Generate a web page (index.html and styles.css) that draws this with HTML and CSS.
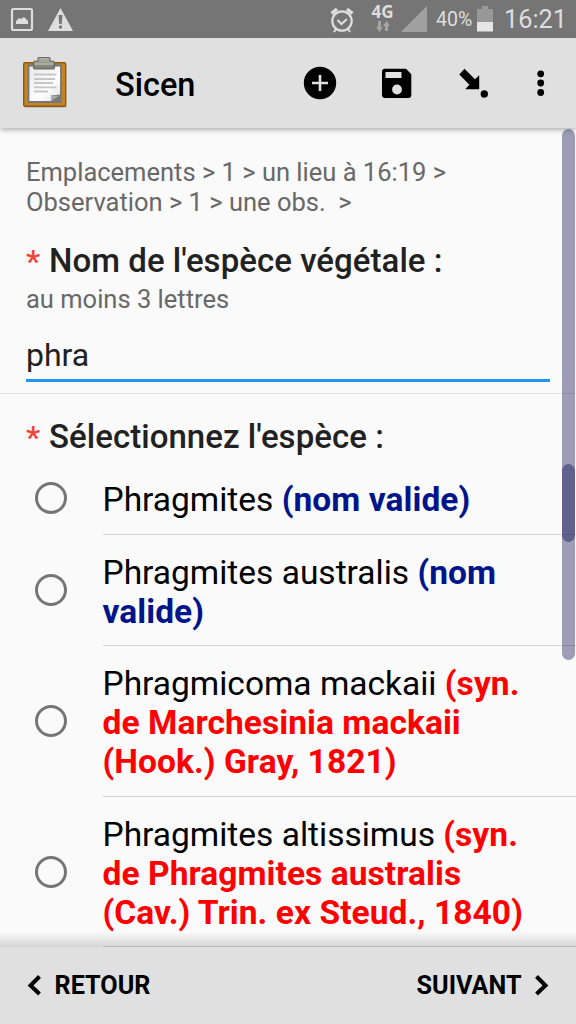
FILE: index.html
```html
<!DOCTYPE html>
<html lang="fr">
<head>
<meta charset="utf-8">
<title>Sicen</title>
<link rel="stylesheet" href="styles.css">
</head>
<body>
<div class="screen">
  <div class="status">
    <svg class="status-left" width="84" height="38" viewBox="0 0 84 38">
      <rect x="12" y="9" width="20" height="21" rx="1.500" fill="none" stroke="#dedede" stroke-width="2.200"/>
      <path d="M16 24v-3l3-3 2 1 3-2 4 4v3z" fill="#dedede"/>
      <path d="M60.500 8L73 31H48z" fill="#dedede"/>
      <path d="M58.500 15h4l-.8 9h-2.400z" fill="#757575"/><circle cx="60.500" cy="27" r="1.700" fill="#757575"/>
    </svg>
    <svg class="clock" width="24" height="26" viewBox="0 0 24 26">
      <g fill="none" stroke="#dedede"><circle cx="12" cy="14" r="9.700" stroke-width="2.200"/>
      <path d="M1.500 6.500L7 2M22.500 6.500L17 2" stroke-width="3.500"/>
      <path d="M7.500 13l4 4 5.500-5" stroke-width="2"/><path d="M6 22l-2 3M18 22l2 3" stroke-width="2"/></g>
    </svg>
    <div class="network"><span>4G</span>
      <svg width="14" height="11" viewBox="0 0 14 11"><path d="M2 0h3v6h2l-3.500 5L0 6h2zM9 10V5H7l3.500-5L14 5h-2v5z" fill="#a5a5a5"/></svg>
    </div>
    <svg class="signal" width="26" height="26" viewBox="0 0 26 26"><path d="M26 0v26H0z" fill="#a0a0a0"/></svg>
    <span class="percent">40%</span>
    <svg class="battery" width="16" height="26" viewBox="0 0 16 26"><path d="M5 0h6v3h5v13H0V3h5z" fill="#989898"/><path d="M0 16h16v9.500H0z" fill="#e6e6e6"/></svg>
    <span class="time">16:21</span>
  </div>

  <header class="toolbar">
    <svg class="logo" width="46" height="54" viewBox="0 0 46 54">
      <defs>
        <linearGradient id="paper" x2="1" y2="1"><stop stop-color="#e5e5e5"/><stop offset=".6" stop-color="#fff"/><stop offset="1" stop-color="#ddd"/></linearGradient>
        <linearGradient id="clip" x2="0" y2="1"><stop stop-color="#b3b4a8"/><stop offset="1" stop-color="#777a70"/></linearGradient>
      </defs>
      <rect x="2" y="49" width="43" height="3" rx="1.500" fill="#000" opacity=".13"/>
      <rect x="1.700" y="6.700" width="42" height="43.600" rx="1.500" fill="#c68424" stroke="#8d5a12" stroke-width="1.400"/>
      <path d="M6.500 9.500h32.500v36.500H6.500z" fill="url(#paper)" stroke="#73777a" stroke-width="1.800"/>
      <path d="M12 18.500h22.500M12 23h21M12 27h19M12 31.300h22.500M12 35.500h14" stroke="#c6c6c6" stroke-width="1.800"/>
      <path d="M29 39.500l9-1V46h-9z" fill="#777b78"/><path d="M29 45v-5.500l8 .2z" fill="#a9aca8"/>
      <path d="M16 5V2.500q0-1 1-1h10q1 0 1 1V5h3q1.500 0 1.500 2v4q0 2-2 2h-17q-2 0-2-2V7q0-2 1.500-2z" fill="url(#clip)" stroke="#6a6d65" stroke-width="1.200"/>
      <path d="M13 8h18" stroke="#c5c6bd" stroke-width="1"/>
    </svg>
    <h1 class="app-title">Sicen</h1>
    <svg class="actions" width="260" height="60" viewBox="0 0 260 60">
      <circle cx="20" cy="30" r="16.200"/><path d="M20 22v16M12 30h16" stroke="#e0e0e0" stroke-width="2.600"/>
      <path d="M85 15.700h21l5.300 5.600V42q0 3-3 3H85q-3 0-3-3V18.700q0-3 3-3z"/>
      <path d="M85.500 19h16v6h-16z" fill="#e0e0e0"/><circle cx="97" cy="36.500" r="4.900" fill="#e0e0e0"/>
      <path d="M159.300 21.500l5.200-5.700 10.500 10.500 4.200-4.100V36.300h-14l4.200-4.600z"/><circle cx="184.300" cy="41" r="3.700"/>
      <circle cx="240.700" cy="20.800" r="3.400"/><circle cx="240.700" cy="30" r="3.400"/><circle cx="240.700" cy="39.500" r="3.400"/>
    </svg>
  </header>

  <main class="content">
    <section class="question">
      <p class="path"><span>Emplacements &gt; 1 &gt; un lieu à 16:19 &gt;</span><br><span>Observation &gt; 1 &gt; une obs.&nbsp; &gt;</span></p>
      <h2 class="label name-label"><span class="star">*</span> <span>Nom de l'espèce végétale :</span></h2>
      <p class="hint">au moins 3 lettres</p>
      <div class="field">phra</div>
    </section>
    <section class="species">
      <h2 class="label"><span class="star">*</span> <span>Sélectionnez l'espèce :</span></h2>
      <div class="option"><i class="radio"></i><div class="choice">Phragmites <b class="valid">(nom valide)</b></div></div>
      <div class="option"><i class="radio"></i><div class="choice">Phragmites australis <b class="valid">(nom<br>valide)</b></div></div>
      <div class="option"><i class="radio"></i><div class="choice">Phragmicoma mackaii <b class="synonym">(syn.<br>de Marchesinia mackaii<br>(Hook.) Gray, 1821)</b></div></div>
      <div class="option"><i class="radio"></i><div class="choice">Phragmites altissimus <b class="synonym">(syn.<br>de Phragmites australis<br>(Cav.) Trin. ex Steud., 1840)</b></div></div>
    </section>
    <div class="scrollbar"><div class="thumb"></div></div>
  </main>

  <footer class="nav">
    <div class="nav-item"><svg width="14" height="22" viewBox="0 0 14 22"><path d="M12.500 1.500L3.500 10.500l9 8.500" fill="none" stroke="#000" stroke-width="4"/></svg><span>RETOUR</span></div>
    <div class="nav-item"><span>SUIVANT</span><svg width="14" height="22" viewBox="0 0 14 22"><path d="M1.500 1.500l9 9-9 8.500" fill="none" stroke="#000" stroke-width="4"/></svg></div>
  </footer>
</div>
</body>
</html>
```
FILE: styles.css
```css
* { box-sizing: border-box; }
body, h1, h2, p { margin: 0; }
body { font-family: Roboto, sans-serif; background: #fafafa; }
.screen { width: 576px; height: 1024px; overflow: hidden; display: flex; flex-direction: column; }
.status { height: 38px; flex: none; display: flex; background: #757575; color: #dedede; }
.status svg { flex: none; }
.clock { margin: 7px 0 0 246px; }
.network { width: 23px; margin: 3px 0 0 17px; display: flex; flex-direction: column; align-items: center; font: bold 17px/18px "Open Sans", sans-serif; }
.signal { margin: 6px 0 0 7px; }
.percent { width: 37px; margin-left: 9px; font-size: 19.500px; line-height: 40px; white-space: nowrap; }
.battery { margin: 6px 0 0 4px; }
.time { margin-left: 11px; font-size: 25.300px; line-height: 40px; font-weight: 400; white-space: nowrap; }
.toolbar { height: 90px; flex: none; display: flex; background: #e0e0e0; position: relative; z-index: 1; box-shadow: 0 2px 5px rgba(0,0,0,.3); clip-path: inset(0 0 -10px 0); }
.logo { margin: 18px 0 0 22px; }
.app-title { margin: 27px 0 0 47px; width: 185px; font-size: 32.500px; line-height: 40px; font-weight: 500; }
.actions { margin-top: 15px; flex: none; }
.content { height: 819px; flex: none; position: relative; overflow: hidden; background: #fafafa; }
.content::after { content: ""; position: absolute; left: 0; right: 0; bottom: 0; height: 15px; background: linear-gradient(rgba(0,0,0,0), rgba(0,0,0,.15)); }
.question { height: 266px; padding: 29px 26px 0; border-bottom: 1px solid #e2e2e2; }
.path { color: #686868; font-size: 25.500px; line-height: 30px; white-space: pre; }
.label { display: flex; gap: 9px; font-size: 33px; letter-spacing: .04px; line-height: 40px; font-weight: 500; color: #212121; white-space: nowrap; }
.name-label { margin-top: 24px; }
.star { color: #f44336; font-weight: 500; font-size: 32px; width: 14px; }
.hint { color: #686868; font-size: 25.500px; line-height: 30px; margin-top: 3px; }
.field { margin-top: 20px; height: 48px; font-size: 32px; line-height: 42px; color: #212121; border-bottom: 3px solid #2196f3; }
.species { padding-top: 23px; }
.species .label { margin: 0 0 5px 26px; }
.option { display: flex; align-items: center; padding-left: 35px; }
.radio { flex: none; width: 32px; height: 32px; border: 3px solid #757575; border-radius: 50%; margin-right: 35.500px; }
.choice { flex: 1; padding: 18px 0 14.500px; border-bottom: 1px solid #d4d4d4; font-size: 33.500px; line-height: 39px; color: #000; white-space: nowrap; }
.valid { color: #00148c; letter-spacing: .07px; }
.synonym { color: #f00; letter-spacing: .07px; }
.scrollbar { position: absolute; top: 1px; left: 562px; width: 12.500px; height: 531px; border-radius: 7px; background: rgba(49,48,107,.46); }
.thumb { margin-top: 335px; height: 78px; border-radius: 7px; background: rgba(49,48,107,.55); }
.nav { height: 77px; flex: none; display: flex; justify-content: space-between; padding: 0 27px; background: #e0e0e0; }
.nav-item { display: flex; align-items: center; gap: 13.500px; font-size: 25.200px; font-weight: 700; }
```
